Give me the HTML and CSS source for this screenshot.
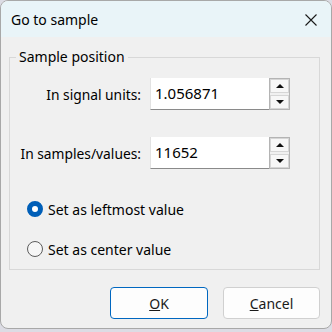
FILE: index.html
```html
<!DOCTYPE html>
<html lang="en">
<head>
  <meta charset="UTF-8">
  <title>Go to sample</title>
  <link rel="stylesheet" href="styles.css">
</head>
<body>
  <div class="window">
    <div class="titlebar">
      <span class="title">Go to sample</span>
      <svg class="close" width="12" height="12" viewBox="0 0 12 12">
        <path d="M0.5 0.5 L11.5 11.5 M11.5 0.5 L0.5 11.5" stroke="#1a1a1a" stroke-width="1.1" fill="none"/>
      </svg>
    </div>
    <div class="content">
      <fieldset class="group">
        <legend>Sample position</legend>
        <div class="field-row">
          <label class="field-label">In signal units:</label>
          <div class="edit">1.056871</div>
          <div class="spin">
            <span class="spin-btn"><i class="arrow up"></i></span>
            <span class="spin-btn"><i class="arrow down"></i></span>
          </div>
        </div>
        <div class="field-row second">
          <label class="field-label">In samples/values:</label>
          <div class="edit">11652</div>
          <div class="spin">
            <span class="spin-btn"><i class="arrow up"></i></span>
            <span class="spin-btn"><i class="arrow down"></i></span>
          </div>
        </div>
        <div class="radios">
          <div class="radio-row">
            <span class="radio checked"></span>
            <span>Set as leftmost value</span>
          </div>
          <div class="radio-row">
            <span class="radio"></span>
            <span>Set as center value</span>
          </div>
        </div>
      </fieldset>
      <div class="buttons">
        <button class="btn default"><u>O</u>K</button>
        <button class="btn"><u>C</u>ancel</button>
      </div>
    </div>
  </div>
</body>
</html>
```

FILE: styles.css
```css
html, body {
  margin: 0;
  padding: 0;
  background: #dcdce4;
}
body {
  font-family: "Noto Sans", "Open Sans", sans-serif;
  color: #000;
  width: 332px;
  height: 332px;
  overflow: hidden;
}
.window {
  width: 332px;
  height: 329px;
  box-sizing: border-box;
  border: 1px solid #a8a8a8;
  border-radius: 8px;
  background: #f0f0f0;
  overflow: hidden;
}
.titlebar {
  height: 36px;
  background: #e9f4f8;
  display: flex;
  align-items: center;
  justify-content: space-between;
  padding: 0 14px 0 10px;
}
.title {
  font-size: 14px;
  color: #000;
}
.close { margin-top: 1px; }
.content {
  padding: 10px 11px 0 8px;
}
.group {
  margin: 0;
  border: 1px solid #d8d8d8;
  padding: 11px 0 8px 0;
  font-size: 14px;
}
.group legend {
  padding: 0 3px;
  margin-left: 6px;
  line-height: 20px;
  font-size: 14px;
}
.field-row {
  display: flex;
  align-items: center;
  height: 32px;
}
.field-row.second { margin-top: 27px; }
.field-label {
  width: 131px;
  text-align: right;
  margin-right: 9px;
  font-size: 13.8px;
}
.edit {
  width: 119px;
  height: 32px;
  box-sizing: border-box;
  background: #fff;
  border-bottom: 1px solid #8a8a8a;
  border-left: 1px solid #e2e2e2;
  padding-left: 4px;
  font-size: 15px;
  line-height: 31px;
}
.spin {
  width: 21px;
  height: 32px;
  box-sizing: border-box;
  border: 1px solid #b4b4b4;
  display: flex;
  flex-direction: column;
  gap: 2px;
  padding: 0;
}
.spin-btn {
  flex: 1;
  border: 1px solid #d6d6d6;
  background: #f7f7f7;
  display: flex;
  align-items: center;
  justify-content: center;
}
.arrow {
  width: 0;
  height: 0;
  border-left: 4px solid transparent;
  border-right: 4px solid transparent;
}
.arrow.up { border-bottom: 4px solid #111; }
.arrow.down { border-top: 4px solid #111; }
.radios {
  margin-top: 28px;
  padding-left: 17px;
  display: flex;
  flex-direction: column;
  gap: 16px;
}
.radio-row {
  display: flex;
  align-items: center;
  gap: 5px;
  height: 24px;
  font-size: 14px;
}
.radio {
  width: 16px;
  height: 16px;
  box-sizing: border-box;
  border-radius: 50%;
  border: 1px solid #5c5c5c;
  background: #f6f6f6;
}
.radio.checked {
  border: 5px solid #005fb8;
  background: #fff;
}
.buttons {
  display: flex;
  justify-content: flex-end;
  gap: 15px;
  margin-top: 17px;
}
.btn {
  width: 97px;
  height: 32px;
  border: 1px solid #d0d0d0;
  border-radius: 4px;
  background: #fdfdfd;
  font-family: "Noto Sans", "Open Sans", sans-serif;
  font-size: 14px;
  color: #1a1a1a;
  padding: 0;
}
.btn.default {
  width: 98px;
  border-color: #0067c0;
}
```
